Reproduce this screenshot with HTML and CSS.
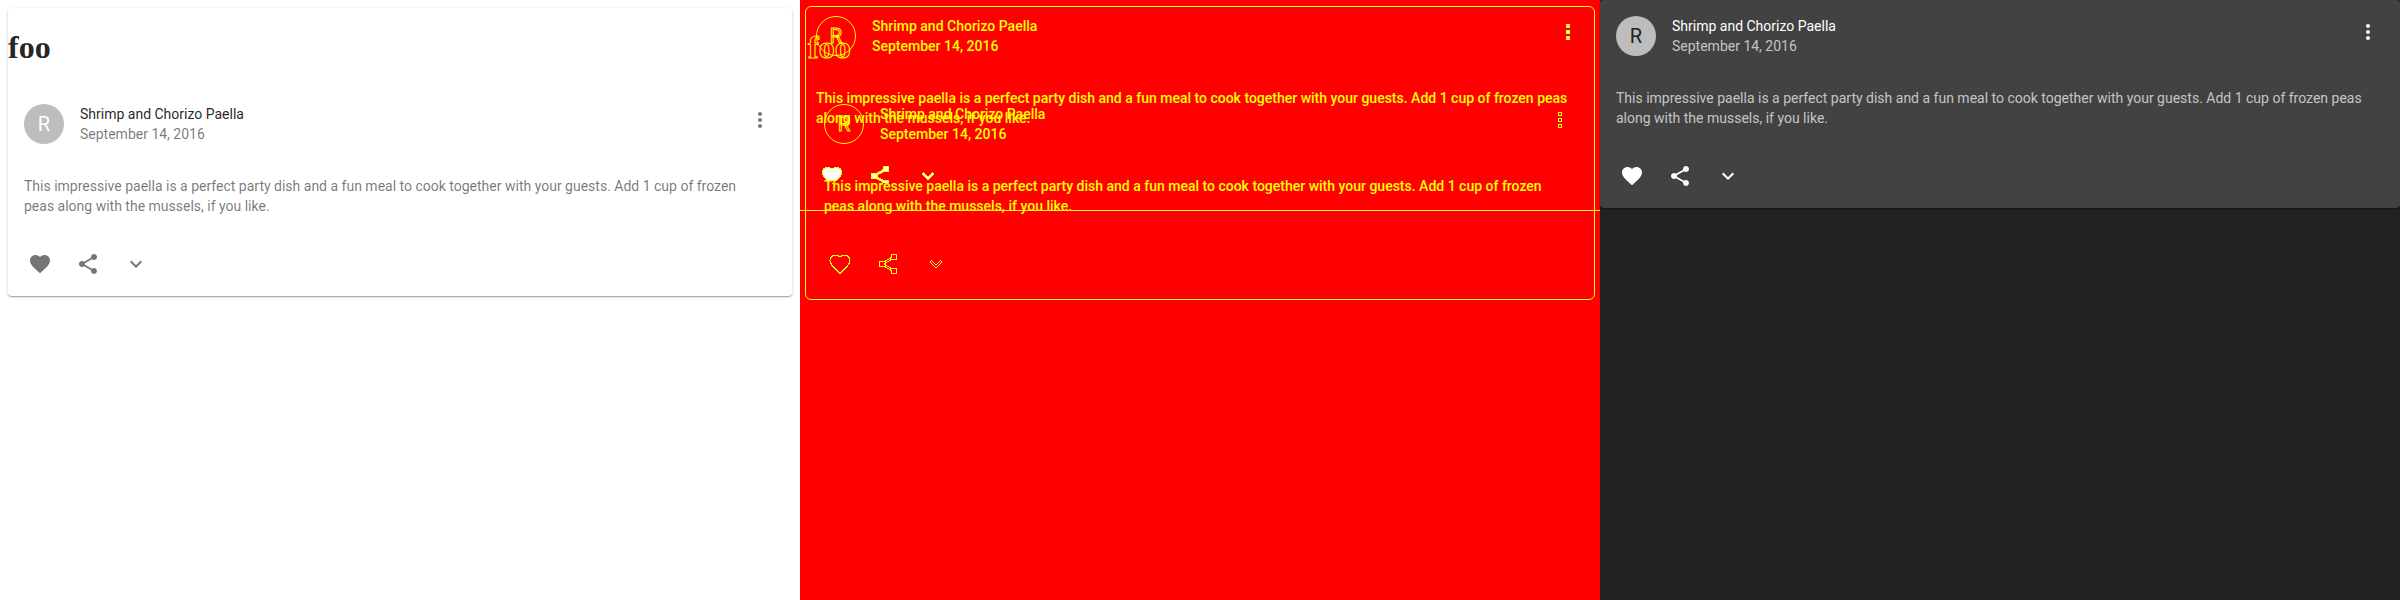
FILE: index.html
```
<!DOCTYPE html>
<html lang="en">
<head>
<meta charset="utf-8">
<title>Card comparison</title>
<link rel="stylesheet" href="styles.css">
</head>
<body>
<svg class="sprite" aria-hidden="true">
  <symbol id="heart" viewBox="0 0 24 24"><path d="M12 21.35l-1.45-1.32C5.4 15.36 2 12.28 2 8.5 2 5.42 4.42 3 7.5 3c1.74 0 3.41.81 4.5 2.09C13.09 3.81 14.76 3 16.5 3 19.58 3 22 5.42 22 8.5c0 3.78-3.4 6.86-8.55 11.54L12 21.35z"/></symbol>
  <symbol id="heart-cut" viewBox="0 0 24 24"><path d="M7.5 16.5C4.5 14 2.500 11.500 2.500 8.500 2.500 5.420 4.420 3.500 7.500 3.500c1.740 0 3.410.5 4.500 1.500 1.090-1 2.760-1.500 4.500-1.500 3.080 0 5 1.920 5 5 0 3-2 5.500-5 8zM12 18.500v1.500"/></symbol>
  <symbol id="share" viewBox="0 0 24 24"><path d="M18 16.08c-.76 0-1.44.3-1.96.77L8.91 12.7c.05-.23.09-.46.09-.7s-.04-.47-.09-.7l7.05-4.11c.54.5 1.25.81 2.04.81 1.66 0 3-1.34 3-3s-1.34-3-3-3-3 1.34-3 3c0 .24.04.47.09.7L8.04 9.81C7.5 9.31 6.79 9 6 9c-1.66 0-3 1.34-3 3s1.34 3 3 3c.79 0 1.500-.31 2.040-.81l7.120 4.160c-.05.21-.08.43-.08.65 0 1.610 1.310 2.920 2.920 2.920s2.920-1.310 2.920-2.920-1.310-2.920-2.920-2.920z"/></symbol>
  <symbol id="expand" viewBox="0 0 24 24"><path d="M16.59 8.59L12 13.17 7.41 8.59 6 10l6 6 6-6z"/></symbol>
  <symbol id="more" viewBox="0 0 24 24"><path d="M12 8c1.1 0 2-.9 2-2s-.9-2-2-2-2 .9-2 2 .9 2 2 2zm0 2c-1.1 0-2 .9-2 2s.9 2 2 2 2-.9 2-2-.9-2-2-2zm0 6c-1.1 0-2 .9-2 2s.9 2 2 2 2-.9 2-2-.9-2-2-2z"/></symbol>
  <symbol id="more-square" viewBox="0 0 24 24"><path d="M10.500 4.500h3v3h-3zM10.500 10.500h3v3h-3zM10.500 16.500h3v3h-3z"/></symbol>
</svg>
<main class="comparison">
  <section class="pane pane-light">
    <article class="card">
      <h1 class="heading">foo</h1>
      <header class="card-header">
        <div class="avatar">R</div>
        <div class="card-titles"><div class="title">Shrimp and Chorizo Paella</div><div class="date">September 14, 2016</div></div>
        <button class="icon-button more" aria-label="settings"><svg class="icon"><use href="#more"/></svg></button>
      </header>
      <p class="card-text">This impressive paella is a perfect party dish and a fun meal to cook together with your guests. Add 1 cup of frozen peas along with the mussels, if you like.</p>
      <footer class="card-actions">
        <button class="icon-button" aria-label="add to favorites"><svg class="icon"><use href="#heart"/></svg></button>
        <button class="icon-button" aria-label="share"><svg class="icon"><use href="#share"/></svg></button>
        <button class="icon-button" aria-label="show more"><svg class="icon"><use href="#expand"/></svg></button>
      </footer>
    </article>
  </section>

  <section class="pane pane-diff">
    <div class="layer layer-after">
      <article class="card">
        <header class="card-header">
          <div class="avatar">R</div>
          <div class="card-titles"><div class="title">Shrimp and Chorizo Paella</div><div class="date">September 14, 2016</div></div>
          <button class="icon-button more" aria-label="settings"><svg class="icon"><use href="#more-square"/></svg></button>
        </header>
        <p class="card-text">This impressive paella is a perfect party dish and a fun meal to cook together with your guests. Add 1 cup of frozen peas along with the mussels, if you like.</p>
        <footer class="card-actions">
          <button class="icon-button" aria-label="add to favorites"><svg class="icon"><use href="#heart-cut"/></svg></button>
          <button class="icon-button" aria-label="share"><svg class="icon icon-cut"><use href="#share"/></svg></button>
          <button class="icon-button" aria-label="show more"><svg class="icon"><use href="#expand"/></svg></button>
        </footer>
      </article>
    </div>
    <div class="layer layer-before">
      <article class="card">
        <h1 class="heading">foo</h1>
        <header class="card-header">
          <div class="avatar">R</div>
          <div class="card-titles"><div class="title">Shrimp and Chorizo Paella</div><div class="date">September 14, 2016</div></div>
          <button class="icon-button more" aria-label="settings"><svg class="icon"><use href="#more-square"/></svg></button>
        </header>
        <p class="card-text">This impressive paella is a perfect party dish and a fun meal to cook together with your guests. Add 1 cup of frozen peas along with the mussels, if you like.</p>
        <footer class="card-actions">
          <button class="icon-button" aria-label="add to favorites"><svg class="icon"><use href="#heart"/></svg></button>
          <button class="icon-button" aria-label="share"><svg class="icon"><use href="#share"/></svg></button>
          <button class="icon-button" aria-label="show more"><svg class="icon"><use href="#expand"/></svg></button>
        </footer>
      </article>
    </div>
  </section>

  <section class="pane pane-dark">
    <article class="card">
      <header class="card-header">
        <div class="avatar">R</div>
        <div class="card-titles"><div class="title">Shrimp and Chorizo Paella</div><div class="date">September 14, 2016</div></div>
        <button class="icon-button more" aria-label="settings"><svg class="icon"><use href="#more"/></svg></button>
      </header>
      <p class="card-text">This impressive paella is a perfect party dish and a fun meal to cook together with your guests. Add 1 cup of frozen peas along with the mussels, if you like.</p>
      <footer class="card-actions">
        <button class="icon-button" aria-label="add to favorites"><svg class="icon"><use href="#heart"/></svg></button>
        <button class="icon-button" aria-label="share"><svg class="icon"><use href="#share"/></svg></button>
        <button class="icon-button" aria-label="show more"><svg class="icon"><use href="#expand"/></svg></button>
      </footer>
    </article>
  </section>
</main>
</body>
</html>
```
FILE: styles.css
```
* { box-sizing: border-box; }
body { margin: 0; font: 14px/20px Roboto, "Liberation Sans", sans-serif; }
.sprite { display: none; }

.comparison {
  display: grid;
  grid-template-columns: repeat(3, minmax(0, 1fr));
  min-height: 100vh;
}

.card { position: relative; border-radius: 4px; color: var(--primary); }
.heading {
  margin: 0;
  padding: 21px 0 22px;
  font: bold 32px/37px "Liberation Serif", serif;
}
.card-header { display: flex; align-items: center; gap: 16px; padding: 16px; }
.avatar {
  display: flex;
  align-items: center;
  justify-content: center;
  width: 40px;
  height: 40px;
  border-radius: 50%;
  background: #bdbdbd;
  color: var(--initial);
  font-size: 20px;
}
.card-titles { flex: 1; }
.date, .card-text { color: var(--secondary); }
.card-text { margin: 0; padding: 16px; }
.pane-light .card-text, .layer-before .card-text { padding-right: 40px; }
.card-actions { display: flex; padding: 8px; }
.icon-button {
  display: flex;
  padding: 12px;
  border: 0;
  background: none;
  color: var(--icon);
}
.more { align-self: flex-start; margin: -8px -8px -8px 0; }
.icon { width: 24px; height: 24px; fill: currentColor; overflow: visible; }

.pane-light {
  --primary: rgba(0, 0, 0, .87);
  --secondary: rgba(0, 0, 0, .54);
  --icon: rgba(0, 0, 0, .54);
  --initial: #fff;
  padding: 8px;
  background: #fff;
}
.pane-light .card {
  box-shadow: 0 1px 3px rgba(0, 0, 0, .2), 0 1px 1px rgba(0, 0, 0, .14), 0 2px 1px -1px rgba(0, 0, 0, .12);
}

.pane-dark {
  --primary: #fff;
  --secondary: rgba(255, 255, 255, .7);
  --icon: #fff;
  --initial: #212121;
  background: #212121;
}
.pane-dark .card {
  background: #424242;
  box-shadow: 0 1px 3px rgba(0, 0, 0, .2), 0 1px 1px rgba(0, 0, 0, .14), 0 2px 1px -1px rgba(0, 0, 0, .12);
}

.pane-diff {
  --primary: #ff0;
  --secondary: #ff0;
  --initial: transparent;
  --icon: transparent;
  display: grid;
  align-items: start;
  background: #f00;
  font-weight: 500;
}
.layer { grid-area: 1 / 1; }
.layer-before { padding: 8px; }
.layer-after { --icon: #fff; }
.pane-diff .heading { color: transparent; }
.pane-diff .heading, .pane-diff .avatar { -webkit-text-stroke: 1px #ff0; }
.pane-diff .avatar { background: none; border: 1px solid #ff0; font-weight: 400; }
.pane-diff .icon { stroke: #ff0; stroke-width: 1px; shape-rendering: crispEdges; }
.icon-cut { clip-path: inset(0 0 5px); }
.pane-diff .card::before { content: ""; position: absolute; pointer-events: none; }
.layer-before .card::before { inset: -2px -3px -4px; border: 1px solid #ff0; border-radius: 6px; }
.layer-after .card::before { inset: auto 0 -3px; border-bottom: 1px solid #ff0; }
```
